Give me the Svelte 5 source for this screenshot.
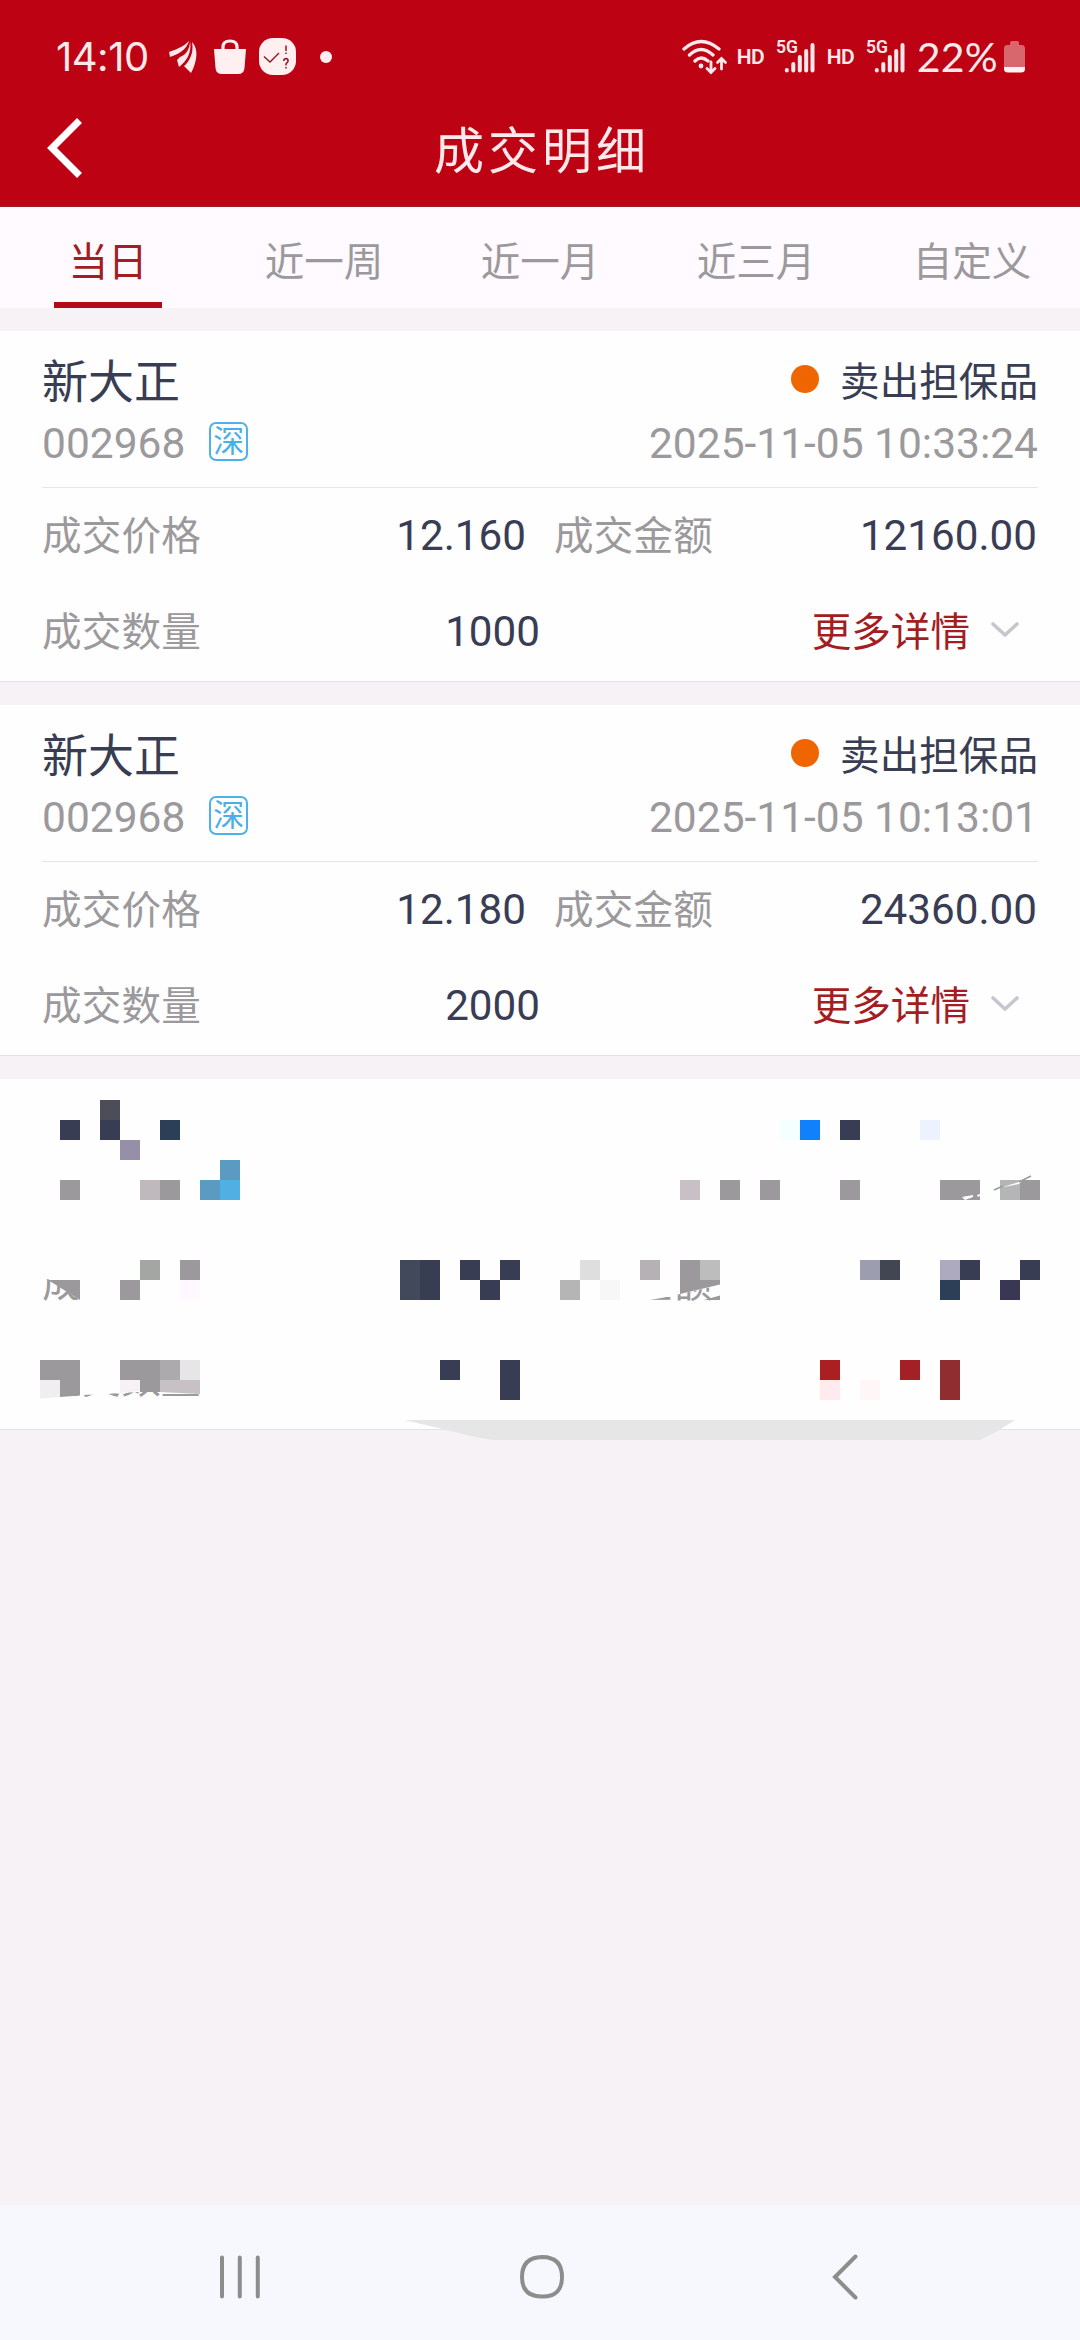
<script lang="ts">
	const tabs = ['当日', '近一周', '近一月', '近三月', '自定义'];
	let activeTab = $state(0);

	const deals = [
		{ name: '新大正', code: '002968', side: '卖出担保品', time: '2025-11-05 10:33:24', price: '12.160', amount: '12160.00', quantity: '1000' },
		{ name: '新大正', code: '002968', side: '卖出担保品', time: '2025-11-05 10:13:01', price: '12.180', amount: '24360.00', quantity: '2000' }
	];

	// Mosaic blocks of the masked card: column, row, fill. One block is 20px.
	const blocks: [number, number, string][] = [
		[5, 1, '#4b4e56'], [3, 2, '#393d53'], [5, 2, '#393d53'], [8, 2, '#2d3f56'], [6, 3, '#9590a7'],
		[11, 4, '#5c9bc1'], [3, 5, '#9c999c'], [7, 5, '#bfb9be'], [8, 5, '#9c999c'], [10, 5, '#5c9bc1'], [11, 5, '#52afe3'],
		[39, 2, '#f4ffff'], [40, 2, '#1080fb'], [42, 2, '#393d53'], [46, 2, '#eef2ff'],
		[34, 5, '#c7c1c6'], [36, 5, '#9c999c'], [38, 5, '#9c999c'], [42, 5, '#9c999c'],
		[47, 5, '#9c999c'], [48, 5, '#9c999c'], [50, 5, '#b3b6b5'], [51, 5, '#9c999c'],
		[7, 9, '#a3a6a3'], [9, 9, '#9c999c'], [6, 10, '#9c999c'], [9, 10, '#fff9ff'],
		[20, 9, '#42495b'], [20, 10, '#42495b'], [21, 9, '#393d53'], [21, 10, '#393d53'],
		[23, 9, '#393d53'], [24, 10, '#393d53'], [25, 9, '#393d53'],
		[29, 9, '#dedede'], [28, 10, '#b5b5b5'], [30, 10, '#f7f7f7'], [32, 9, '#b5b1b5'], [34, 9, '#9c999c'], [35, 9, '#bdbdbd'],
		[43, 9, '#9c9dae'], [44, 9, '#424552'], [47, 9, '#ada9bf'], [48, 9, '#393d53'], [47, 10, '#2d3f56'],
		[50, 10, '#393753'], [51, 9, '#393d53'],
		[2, 14, '#9c999c'], [3, 14, '#9c999c'], [6, 14, '#9c999c'], [7, 14, '#9c999c'], [8, 14, '#adaaad'], [9, 14, '#e6e6e6'],
		[22, 14, '#393d53'], [25, 14, '#393d53'], [25, 15, '#393d53'],
		[41, 14, '#ab1f22'], [41, 15, '#ffebee'], [43, 15, '#fff6f7'], [45, 14, '#a32126'], [47, 14, '#8f2d31'], [47, 15, '#8f2d31']
	];
</script>

{#snippet signal()}
	<svg class="signal" width="40" height="44" viewBox="0 -8 40 44">
		<text x="0" y="14" font-size="18" font-weight="600" textLength="22" lengthAdjust="spacingAndGlyphs">5G</text>
		<g stroke="#ffe9ea" stroke-width="4" stroke-linecap="round">
			<path d="M10.800 31v.5M17.300 25v6.500M23.800 18v13.500M30.200 12v19.500M36.500 6v25.500" />
		</g>
	</svg>
{/snippet}

<div class="screen">
	<header>
		<div class="status">
			<span class="clock">14:10</span>
			<svg class="leaf" width="28" height="34" viewBox="0 0 28 34" fill="#ffe9ea">
				<path d="M0 12C9 9 15 6 20 1C17 10 10 14 1 17Z" />
				<path d="M21 1C21 9 17 15 11 17L8 20L10 27C18 21 23 12 21 1Z" />
				<path d="M23 2C25 12 21 21 15 26L22 33C28 22 30 9 23 2Z" />
			</svg>
			<svg class="bag" width="32" height="36" viewBox="0 0 32 36">
				<path d="M9 11V8Q9 2 16 2T23 8V11" fill="none" stroke="#ffeff0" stroke-width="3.200" />
				<path d="M0 10H32L30.500 29Q30 35 24 35H8Q2 35 1.500 29Z" fill="#ffeff0" />
			</svg>
			<svg class="quiz" width="37" height="37" viewBox="0 0 37 37">
				<rect width="37" height="37" rx="14" fill="#ffeff0" />
				<path d="M5 18.500L11 24L20 15" fill="none" stroke="#8e1820" stroke-width="1.400" />
				<path d="M27 7.500V13M27 14.500V16M24.700 23Q25 20.500 27.200 20.500Q29.500 21 29 23.500L27 26V27.500M27 29V30.500" fill="none" stroke="#8e1820" stroke-width="1.500" />
			</svg>
			<i class="more"></i>
			<div class="right">
				<svg class="wifi" width="46" height="36" viewBox="0 0 46 36" fill="none" stroke="#ffe9ea" stroke-width="3.300" stroke-linecap="round">
					<path d="M2 10Q19-5 37 10M7.500 16Q19 5 31 16M13 22Q19 16 26 22" />
					<path d="M29 23V33M25 29.500L29 33.500L33 29.500M39.500 30V20M35.500 23.500L39.500 19.500L43.500 23.500" stroke-width="2.800" />
					<circle cx="19" cy="27" r="2.400" fill="#ffe9ea" stroke="none" />
				</svg>
				<span class="hd">HD</span>
				{@render signal()}
				<span class="hd">HD</span>
				{@render signal()}
				<span class="percent">22%</span>
				<svg class="battery" width="21" height="32" viewBox="0 0 21 32">
					<path d="M6 4V2Q6 0 8 0H13Q15 0 15 2V4H18Q21 4 21 8V27H0V8Q0 4 3 4Z" fill="#d8666d" />
					<path d="M0 26H21V28Q21 31.500 17 31.500H4Q0 31.500 0 28Z" fill="#fff2f2" />
				</svg>
			</div>
		</div>
		<div class="titlebar">
			<svg class="back" width="36" height="60" viewBox="0 0 36 60" fill="none" stroke="#fff" stroke-width="7">
				<path d="M32.500 2.500L5 30L32.500 57.500" />
			</svg>
			<h1>成交明细</h1>
		</div>
	</header>

	<nav class="tabs">
		{#each tabs as tab, i}
			<button class:active={activeTab === i} onclick={() => (activeTab = i)}>{tab}</button>
		{/each}
	</nav>

	<main>
		{#each deals as deal}
			<article>
				<div class="row head">
					<span class="name">{deal.name}</span>
					<span class="side"><i class="dot"></i>{deal.side}</span>
				</div>
				<div class="row sub">
					<span class="code">{deal.code}<span class="market">深</span></span>
					<span class="time">{deal.time}</span>
				</div>
				<div class="row first">
					<span class="label">成交价格</span>
					<span class="value price">{deal.price}</span>
					<span class="label">成交金额</span>
					<span class="value amount">{deal.amount}</span>
				</div>
				<div class="row second">
					<span class="label">成交数量</span>
					<span class="value quantity">{deal.quantity}</span>
					<span class="detail">更多详情
						<svg width="30" height="18" viewBox="0 0 30 18" fill="none" stroke="#c6c6ce" stroke-width="3.600" stroke-linecap="round" stroke-linejoin="round">
							<path d="M3 3L15 14L27 3" />
						</svg>
					</span>
				</div>
			</article>
		{/each}

		<article class="masked">
			<svg width="1080" height="370" viewBox="0 1079 1080 370">
				<clipPath id="first-label"><path d="M40 1279H48L80 1300V1303H40Z" /></clipPath>
				<clipPath id="amount-label"><path d="M650 1300L672 1296L680 1294L720 1285V1302H650Z" /></clipPath>
				<clipPath id="last-label"><path d="M60 1395.500L100 1394.500L120 1393L140 1392L158 1392L160 1394H200V1398H60Z" /></clipPath>

				{#each blocks as [col, row, fill]}
					<rect x={col * 20} y={1080 + row * 20} width="20" height="20" {fill} />
				{/each}

				<path d="M48 1280H80V1300Z" fill="#9c999c" />
				<path d="M680 1280H720V1284.500L680 1294Z" fill="#9c999c" />
				<path d="M700 1280H720V1280Z" fill="#bdbdbd" />
				<path d="M704 1300L720 1295.500V1300Z" fill="#9c999c" />
				<path d="M40 1380H60V1397L40 1398.500Z" fill="#efeff0" />
				<path d="M60 1380H80V1395.500L60 1397Z" fill="#9c999c" />
				<path d="M120 1380H140V1391L120 1393Z" fill="#f7f1f6" />
				<path d="M140 1380H160V1392H140Z" fill="#9c999c" />
				<path d="M160 1380H200V1394L160 1392Z" fill="#c7c1c6" />
				<text class="mask-text" x="42" y="1297" clip-path="url(#first-label)">成交价格</text>
				<text class="mask-text" x="554" y="1297" clip-path="url(#amount-label)">成交金额</text>
				<text class="mask-text" x="42" y="1393" clip-path="url(#last-label)">成交数量</text>

				<path d="M962 1197L973 1195V1197L965 1200ZM977 1195L980 1194V1196L978 1197ZM1003 1187L1022 1181L1019 1184L1004 1187Z" fill="#fff" />
				<path d="M994 1190L1003 1186M1019 1182L1031 1176" stroke="#9c999c" stroke-width="1.500" />
				<path d="M404 1420H1015L1001 1429Q985 1438 980 1440H494Q476 1438 443 1429Z" fill="#e6e6e6" />
			</svg>
		</article>
	</main>

	<footer>
		<svg width="1080" height="135" viewBox="0 2205 1080 135" fill="none" stroke="#8c8e8c" stroke-width="4" stroke-linecap="round">
			<path d="M222 2257.500V2296.500M239.800 2257.500V2296.500M257.800 2257.500V2296.500" />
			<path d="M542 2257Q562 2257 562 2277T542 2296.500Q522 2296.500 522 2277T542 2257Z" />
			<path d="M855.500 2256.500L835 2277L855.500 2297.500" />
		</svg>
	</footer>
</div>

<style>
	:global(body) {
		background: #f7f2f6;
	}

	.screen {
		width: 1080px;
		height: 2340px;
		display: flex;
		flex-direction: column;
		overflow: hidden;
		background: #f7f2f6;
		color: #393d53;
		font-family: Roboto, 'Noto Sans CJK SC', sans-serif;
		font-size: 39.6px;
	}

	header {
		height: 207px;
		box-sizing: border-box;
		border-bottom: 1px solid #a12029;
		background: #bd0214;
		color: #ffe9ea;
	}

	.status {
		display: flex;
		align-items: center;
		height: 113px;
		padding: 0 55px 0 56px;
	}

	.clock {
		width: 96px;
		margin-right: 17px;
		font-family: Inter, sans-serif;
		font-size: 40px;
		letter-spacing: -0.5px;
	}

	.leaf {
		margin-right: 17px;
	}

	.bag {
		margin-right: 13px;
	}

	.more {
		width: 12px;
		height: 12px;
		margin-left: 24px;
		border-radius: 50%;
		background: #ffeff0;
	}

	.right {
		display: flex;
		align-items: center;
		margin-left: auto;
	}

	.wifi {
		margin-right: 9px;
	}

	.hd {
		width: 27px;
		font-size: 21px;
		font-weight: 600;
		letter-spacing: -0.5px;
	}

	.signal {
		margin: -8px 11px 0 12px;
	}

	.signal text {
		fill: #ffe9ea;
	}

	.percent {
		font-family: Lato, sans-serif;
		font-size: 41px;
		letter-spacing: 0.3px;
	}

	.battery {
		margin-left: 6px;
	}

	.titlebar {
		display: grid;
		grid-template-columns: 1fr auto 1fr;
		align-items: center;
		height: 71px;
		margin-top: -2px;
		padding: 0 43px 0 47px;
	}

	h1 {
		grid-column: 2;
		margin: 0 0 1px;
		font-size: 50px;
		font-weight: 400;
		letter-spacing: 4px;
	}

	.tabs {
		display: flex;
		height: 101px;
		background: #fffaff;
	}

	.tabs button {
		position: relative;
		width: 216px;
		padding: 1px 0 0;
		border: 0;
		background: none;
		color: #9c999c;
		font: inherit;
	}

	.tabs .active {
		color: #a31d22;
	}

	.tabs .active::after {
		content: '';
		position: absolute;
		left: 54px;
		right: 54px;
		bottom: 0;
		height: 6px;
		background: #b50819;
	}

	main {
		flex: 1;
	}

	article {
		height: 351px;
		box-sizing: border-box;
		margin-top: 23px;
		padding: 0 42px;
		border-bottom: 1px solid #e3e3e4;
		background: #fefefe;
	}

	.row {
		display: flex;
		align-items: center;
	}

	.head {
		justify-content: space-between;
		height: 86px;
		padding-top: 8px;
		box-sizing: border-box;
	}

	.name {
		font-size: 46px;
	}

	.side {
		display: flex;
		align-items: center;
	}

	.dot {
		width: 28px;
		height: 28px;
		margin: 2px 21px 0 0;
		border-radius: 50%;
		background: #ef6600;
	}

	.sub {
		justify-content: space-between;
		height: 71px;
		padding-bottom: 17px;
		box-sizing: border-box;
		border-bottom: 1px solid #e6e6e6;
		color: #9c999c;
		font-size: 42.500px;
	}

	.code {
		display: flex;
		align-items: center;
	}

	.market {
		width: 39px;
		height: 39px;
		margin: -5px 0 0 24px;
		box-sizing: border-box;
		border: 2px solid #4fb1e8;
		border-radius: 7px;
		color: #4aaee8;
		font-size: 31px;
		line-height: 35px;
		text-align: center;
	}

	.first,
	.second {
		height: 96px;
	}

	.first {
		margin-top: -1px;
	}

	.label {
		width: 160px;
		padding-bottom: 5px;
		color: #9c999c;
		letter-spacing: 0.2px;
	}

	.value {
		font-size: 42.200px;
		text-align: right;
	}

	.price {
		width: 324px;
		margin-right: 28px;
	}

	.amount {
		flex: 1;
		padding-right: 1px;
	}

	.quantity {
		width: 338px;
	}

	.detail {
		display: flex;
		align-items: center;
		margin-left: auto;
		padding: 0 18px 5px 0;
		color: #a31d22;
	}

	.detail svg {
		margin: 2px 0 0 20px;
	}

	.masked {
		padding: 0;
	}

	.masked svg {
		display: block;
	}

	.mask-text {
		fill: #9c999c;
	}

	footer {
		height: 135px;
		background: #f7f7fe;
	}
</style>
